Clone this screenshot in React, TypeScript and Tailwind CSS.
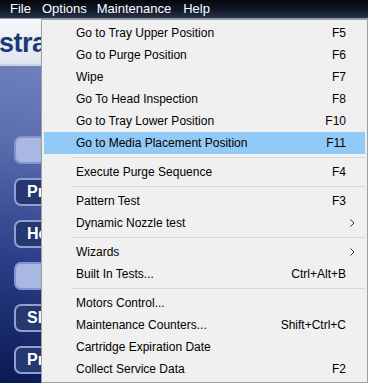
import React from "react";

type Row =
  | { kind: "item"; label: string; shortcut?: string; sub?: boolean; active?: boolean }
  | { kind: "sep" };

const ROWS: Row[] = [
  { kind: "item", label: "Go to Tray Upper Position", shortcut: "F5" },
  { kind: "item", label: "Go to Purge Position", shortcut: "F6" },
  { kind: "item", label: "Wipe", shortcut: "F7" },
  { kind: "item", label: "Go To Head Inspection", shortcut: "F8" },
  { kind: "item", label: "Go to Tray Lower Position", shortcut: "F10" },
  { kind: "item", label: "Go to Media Placement Position", shortcut: "F11", active: true },
  { kind: "sep" },
  { kind: "item", label: "Execute Purge Sequence", shortcut: "F4" },
  { kind: "sep" },
  { kind: "item", label: "Pattern Test", shortcut: "F3" },
  { kind: "item", label: "Dynamic Nozzle test", sub: true },
  { kind: "sep" },
  { kind: "item", label: "Wizards", sub: true },
  { kind: "item", label: "Built In Tests...", shortcut: "Ctrl+Alt+B" },
  { kind: "sep" },
  { kind: "item", label: "Motors Control..." },
  { kind: "item", label: "Maintenance Counters...", shortcut: "Shift+Ctrl+C" },
  { kind: "item", label: "Cartridge Expiration Date" },
  { kind: "item", label: "Collect Service Data", shortcut: "F2" },
];

// side panel buttons, only the left edge shows behind the menu
const BUTTONS: { text: string; light?: boolean }[] = [
  { text: "", light: true },
  { text: "Pr" },
  { text: "He" },
  { text: "", light: true },
  { text: "Sli" },
  { text: "Pr" },
];

function SubArrow() {
  return (
    <svg width="5" height="8" viewBox="0 0 5 8" className="absolute right-[10px] top-[7px]">
      <path d="M0.5 0.5 L4 4 L0.5 7.5" fill="none" stroke="#333" strokeWidth="1" />
    </svg>
  );
}

function MenuRow({ row }: { row: Row }) {
  if (row.kind === "sep") {
    return (
      <div className="h-[7px] pl-[28px] pt-[3px]">
        <div className="h-px bg-[#d7d7d7]" />
      </div>
    );
  }
  return (
    <div
      className={`relative flex h-[22px] items-center pl-[32px] pr-[19px] ${row.active ? "bg-[#91c9f7]" : ""}`}
    >
      <span className="flex-1 whitespace-nowrap">{row.label}</span>
      {row.shortcut && <span className="whitespace-nowrap">{row.shortcut}</span>}
      {row.sub && <SubArrow />}
    </div>
  );
}

export default function App() {
  return (
    <div className="relative h-[383px] w-[368px] overflow-hidden bg-[#f0f0f0] font-['Liberation_Sans',Arial,sans-serif]">
      {/* Menu bar */}
      <div className="flex h-[19px] items-center border-b border-[#8f9aa8] bg-[linear-gradient(#05070d,#111a2b_60%,#2a3548)] pl-[5px] text-[13px] text-white">
        <span className="px-[5px]">File</span>
        <span className="ml-[1px] px-[5px]">Options</span>
        <span className="px-[5px]">Maintenance</span>
        <span className="ml-[2px] px-[5px]">Help</span>
      </div>

      {/* App window behind the menu */}
      <div className="flex h-[364px] flex-col">
        <div className="h-[45px] overflow-hidden bg-[linear-gradient(#f6f8fc,#dfe5ef)] pt-[9px]">
          <span className="-ml-[1px] block text-[27px] font-bold leading-[30px] tracking-[-0.5px] text-[#1d3a78]">
            stra
          </span>
        </div>
        <div className="flex flex-1 flex-col gap-[14px] border-t-2 border-[#c9d1e3] bg-[linear-gradient(12deg,#0a1953_0%,#2b3e88_32%,#5a6dae_62%,#8191c7_100%)] pl-[14px] pt-[70px]">
          {BUTTONS.map((b, i) => (
            <div
              key={i}
              className={`flex h-[28px] w-[120px] items-center rounded-[7px] border-2 pl-[11px] text-[16px] font-bold text-white ${
                b.light ? "border-[#8294cf] bg-[#a9b8e2]" : "border-[#8ea1d6] bg-[#26386d]"
              }`}
            >
              {b.text}
            </div>
          ))}
        </div>
      </div>

      {/* Options dropdown */}
      <div className="absolute left-[41px] top-[19px] w-[327px] border border-[#a0a0a0] bg-[#f0f0f0] p-[2px] text-[12px] text-black shadow-[2px_2px_3px_rgba(0,0,0,0.3)]">
        {ROWS.map((r, i) => (
          <MenuRow key={i} row={r} />
        ))}
      </div>
    </div>
  );
}
